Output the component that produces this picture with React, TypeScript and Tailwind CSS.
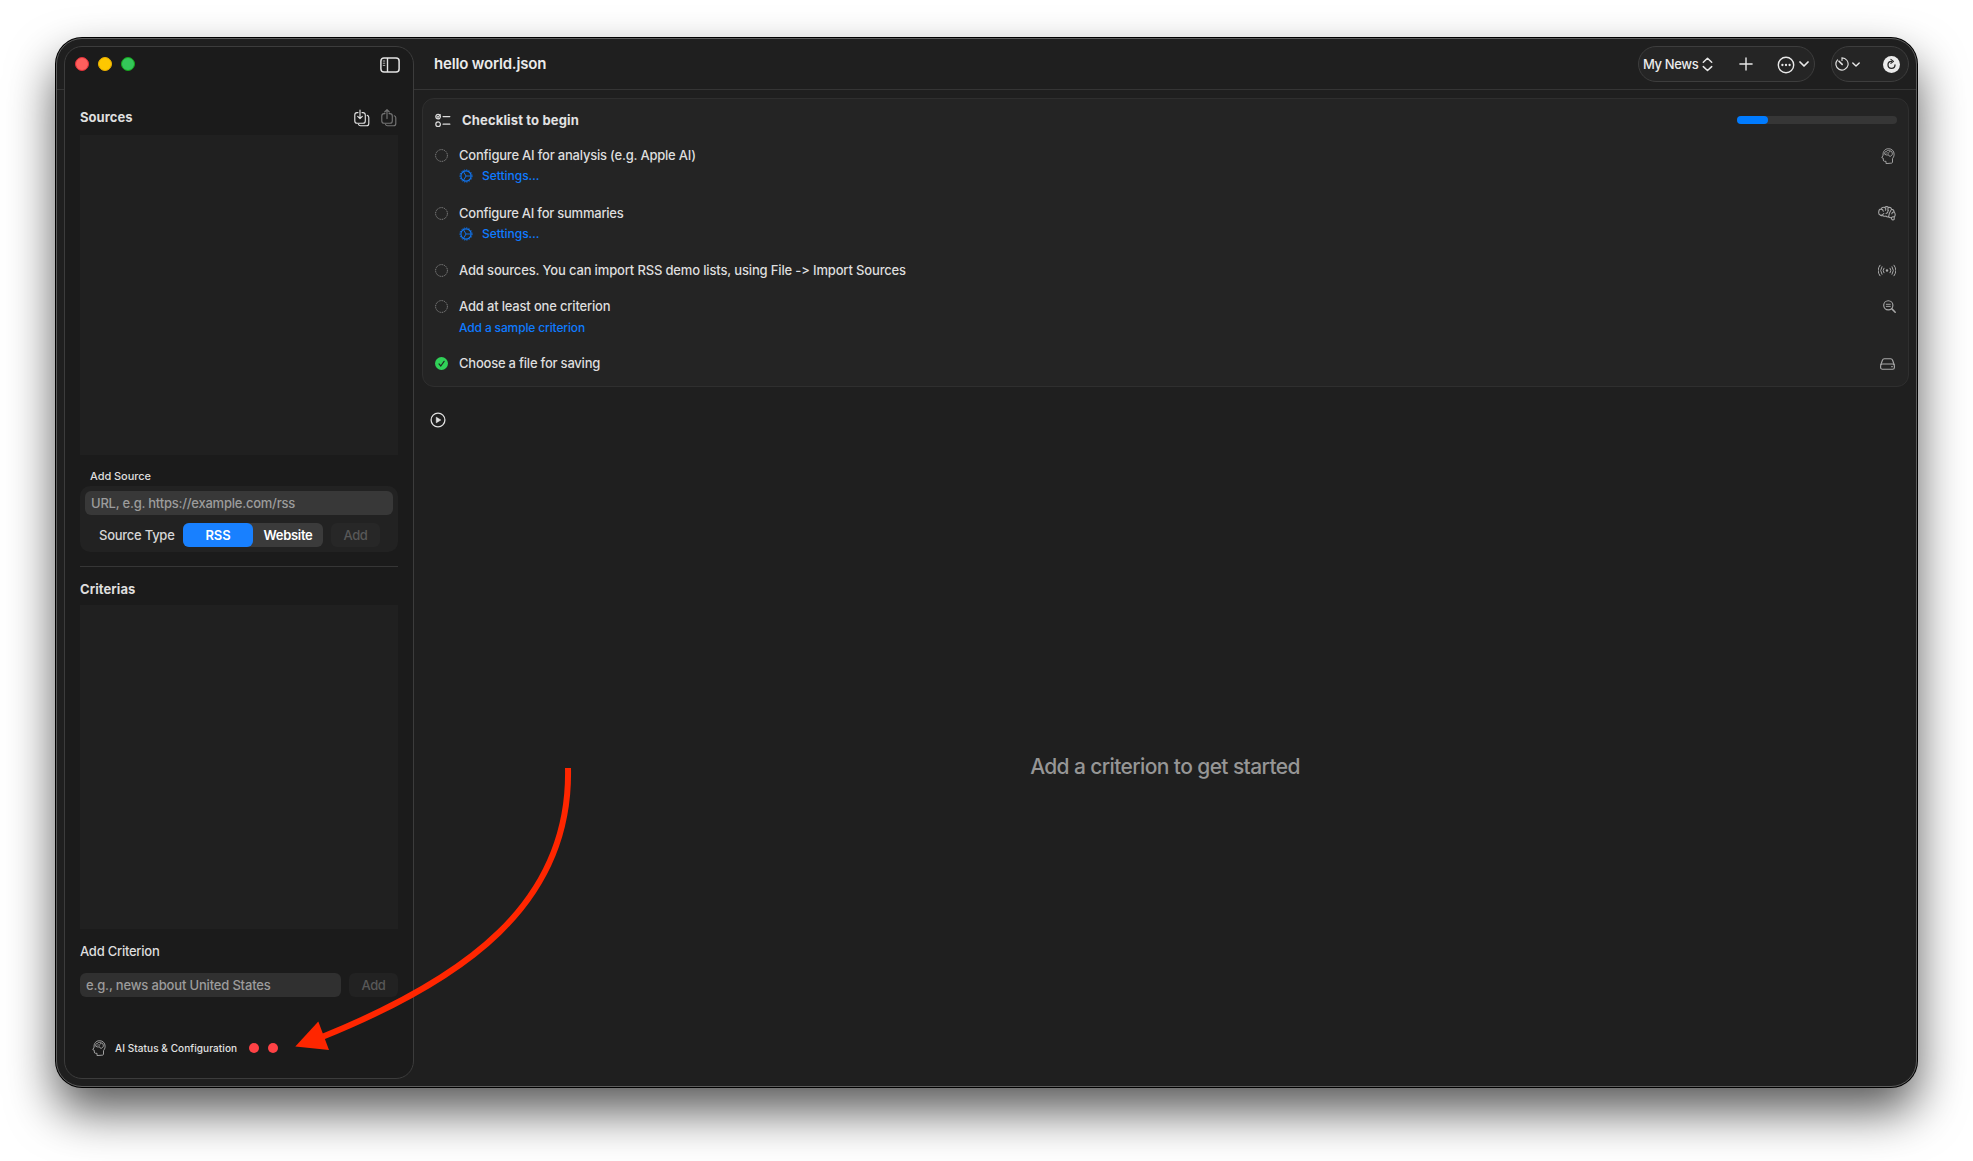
import React from "react";

type IconProps = { className?: string };

const SidebarIcon = () => (
  <svg width="20" height="16" viewBox="0 0 20 16" fill="none" stroke="#e4e4e4">
    <rect x="0.9" y="0.9" width="18.2" height="14.2" rx="3" strokeWidth="1.5" />
    <path d="M7.5 1v14" strokeWidth="1.4" />
    <path d="M2.8 4h2.4M2.8 6.2h2.4M2.8 8.4h2.4" strokeWidth="1" opacity="0.75" />
  </svg>
);

const ImportIcon = () => (
  <svg width="16" height="18" viewBox="0 0 16 18" fill="none" stroke="#e2e2e2" strokeWidth="1.15" strokeLinecap="round" strokeLinejoin="round">
    <path d="M4 3.6H3A2.3 2.3 0 0 0 .8 5.9v6A2.3 2.3 0 0 0 3 14.2h6a2.3 2.3 0 0 0 2.3-2.3v-6A2.3 2.3 0 0 0 9 3.6H8" />
    <path d="M6 1v8.6M3.7 7.4 6 9.7l2.3-2.3" />
    <path d="M13.2 6.4c1 .3 1.6 1 1.6 2v6a2.3 2.3 0 0 1-2.3 2.3h-6c-1 0-1.7-.5-2-1.3" />
  </svg>
);

const ExportIcon = () => (
  <svg width="16" height="18" viewBox="0 0 16 18" fill="none" stroke="#747474" strokeWidth="1.15" strokeLinecap="round" strokeLinejoin="round">
    <path d="M4 4.6H3A2.3 2.3 0 0 0 .8 6.9v5A2.3 2.3 0 0 0 3 14.2h6a2.3 2.3 0 0 0 2.3-2.3v-5A2.3 2.3 0 0 0 9 4.6H8" />
    <path d="M6 9.6V.9M3.7 3 6 .7 8.3 3" />
    <path d="M13.2 6.8c1 .3 1.6 1 1.6 2v5.6a2.3 2.3 0 0 1-2.3 2.3h-6c-1 0-1.700-.5-2-1.3" />
  </svg>
);

const HeadIcon = ({ className = "" }: IconProps) => (
  <svg className={className} width="14" height="16" viewBox="0 0 14 16" fill="none" stroke="#a8a8a8" strokeWidth="0.95" strokeLinecap="round" strokeLinejoin="round">
    <path d="M5 15.200v-1.900H3.600c-.9 0-1.300-.5-1.300-1.300v-1.600L.8 9.700l1.300-2.500C1.700 3.400 4.100.7 7.500.7c3.300 0 5.600 2.400 5.600 5.500 0 2.300-.9 3.300-1.600 4.500v3.300c0 .8-.4 1.200-1.200 1.200z" />
    <path d="M4 6.200c-.9-1.500.2-3 1.600-2.900.8-1.300 2.700-1.200 3.200-.3 1.500-.2 2.500.9 2.300 2 .6.9.2 2.300-.9 2.600-.4.900-1.500 1-2 .4L7.400 6.700c-1 .5-2.700.5-3.400-.5z" />
    <path d="M5.700 5c.7-.4 1.400-.2 1.800.3M8.700 3.200c.1.700-.2 1.100-.8 1.400" strokeWidth="0.8" />
  </svg>
);

const BrainIcon = () => (
  <svg width="18" height="15" viewBox="0 0 18 15" fill="none" stroke="#a8a8a8" strokeWidth="1.050" strokeLinecap="round" strokeLinejoin="round">
    <path d="M2.600 9.300C1.200 8.900.5 7.700.7 6.200.7 4.600 1.600 3.300 3 3.100 3.600 1.600 5.200.9 6.700 1.400 7.900.3 9.700.4 10.500 1.500c1.400-.3 2.700.4 3.100 1.700 1.500.2 2.500 1.400 2.500 2.800.9.9 1.300 2.300.9 3.600-.2.700-.5 1.100-.8 1.400v2.300c-.6.9-1.900.9-2.400 0l-.6-1.700c-.9.200-1.800-.1-2.300-.7-1.200.3-2.300 0-2.900-.8-1.100.4-2.300.2-3-.5-.9.300-1.700.1-2.400-.3z" />
    <path d="M2.600 9.300c1.600-.1 2.500-.8 3.200-1.800M3 3.200c1.400 0 2.200.8 2.300 2M6.700 1.500c1.200.6 1.400 1.700.8 2.800M10.500 1.600c-.9 1-.9 2 0 2.700M9.900 4.200c.3 1.600-.2 2.900-1.900 3.200M13.500 3.300c-1.400 2-2.500 4.300-2.900 7.400M16 6.100c-1.200-.1-2 .5-2.200 1.700M13.400 11.600c.8-.8 1.700-1.100 2.800-.7" />
  </svg>
);

const RadioIcon = () => (
  <svg width="18" height="13" viewBox="0 0 18 13" fill="none" stroke="#a8a8a8" strokeWidth="1" strokeLinecap="round">
    <circle cx="9" cy="6.5" r="1.2" fill="#a8a8a8" stroke="none" />
    <path d="M5.900 4.200a4 4 0 0 0 0 4.600M3.900 2.700a6.600 6.600 0 0 0 0 7.600M2 1.200a9 9 0 0 0 0 10.600M12.100 4.200a4 4 0 0 1 0 4.600M14.100 2.700a6.600 6.600 0 0 1 0 7.600M16 1.200a9 9 0 0 1 0 10.600" />
  </svg>
);

const SearchTextIcon = () => (
  <svg width="13" height="13" viewBox="0 0 13 13" fill="none" stroke="#a8a8a8" strokeLinecap="round">
    <circle cx="5.3" cy="5.3" r="4.6" strokeWidth="1.15" />
    <path d="M8.900 8.900l3.300 3.300" strokeWidth="1.5" />
    <path d="M3.300 4.300h4M3.300 6.400h4" strokeWidth="0.95" />
  </svg>
);

const DriveIcon = () => (
  <svg className="mr-px" width="15" height="12" viewBox="0 0 15 12" fill="none" stroke="#a8a8a8" strokeWidth="1.15" strokeLinejoin="round">
    <path d="M.7 7 2.500 2C2.800 1.100 3.400.7 4.300.7h6.400c.9 0 1.500.4 1.800 1.300l1.800 5" />
    <rect x="0.6" y="6" width="13.8" height="5.2" rx="1.8" />
    <path d="M11.300 8.600h1.400" />
  </svg>
);

const ChecklistIcon = () => (
  <svg className="mt-px" width="16" height="15" viewBox="0 0 16 15" fill="none" stroke="#dcdcdc" strokeLinecap="round">
    <circle cx="3.1" cy="3.6" r="2.3" strokeWidth="1.2" />
    <path d="M2.200 3.500l.8.900L5.200 1.600" strokeWidth="1.1" />
    <circle cx="3.1" cy="11.2" r="2.3" strokeWidth="1.2" />
    <path d="M8.100 3.600h6.700M8.100 11.200h6.700" strokeWidth="1.3" />
  </svg>
);

const GearIcon = () => (
  <svg width="14" height="14" viewBox="0 0 14 14" fill="none" stroke="#0f7bff">
    <circle cx="7" cy="7" r="5.1" strokeWidth="1.1" />
    <circle cx="7" cy="7" r="6.1" strokeWidth="0.9" strokeDasharray="1.3 1.255" />
    <path d="M4.700 3 7 7l-2.300 4M7 7h4.800" strokeWidth="0.9" />
  </svg>
);

const DottedCircle = () => (
  <svg width="13" height="13" viewBox="0 0 13 13" fill="none" stroke="#8a8a8a">
    <circle cx="6.5" cy="6.5" r="5.9" strokeWidth="1" strokeDasharray="1.1 0.754" />
  </svg>
);

const DoneCircle = () => (
  <svg width="13" height="13" viewBox="0 0 13 13" fill="none">
    <circle cx="6.5" cy="6.5" r="6.5" fill="#30d158" />
    <path d="M4 6.900l1.800 2.100 3.300-4.700" stroke="#1f2b22" strokeWidth="1.2" strokeLinecap="round" strokeLinejoin="round" />
  </svg>
);

const PlayIcon = () => (
  <svg width="16" height="16" viewBox="0 0 16 16">
    <circle cx="8" cy="8" r="6.9" fill="none" stroke="#e0e0e0" strokeWidth="1.3" />
    <path d="M6.200 5.100v5.800L11 8z" fill="#e0e0e0" stroke="#e0e0e0" strokeWidth="0.4" strokeLinejoin="round" />
  </svg>
);

const UpDownIcon = () => (
  <svg width="11" height="15" viewBox="0 0 11 15" fill="none" stroke="#e8e8e8" strokeWidth="1.5" strokeLinecap="round" strokeLinejoin="round">
    <path d="M1.300 5.200 5.500 1.300l4.200 3.900M1.300 9.600l4.200 3.900 4.200-3.900" />
  </svg>
);

const PlusIcon = () => (
  <svg width="14" height="14" viewBox="0 0 14 14" stroke="#e8e8e8" strokeWidth="1.4" strokeLinecap="round">
    <path d="M7 .9v12.200M.9 7h12.200" />
  </svg>
);

const MoreIcon = () => (
  <svg width="18" height="18" viewBox="0 0 18 18">
    <circle cx="9" cy="9" r="7.7" fill="none" stroke="#e8e8e8" strokeWidth="1.4" />
    <circle cx="5.4" cy="9" r="1.15" fill="#e8e8e8" />
    <circle cx="9" cy="9" r="1.15" fill="#e8e8e8" />
    <circle cx="12.6" cy="9" r="1.15" fill="#e8e8e8" />
  </svg>
);

const ChevronIcon = ({ className = "" }: IconProps) => (
  <svg className={className} viewBox="0 0 10 6" fill="none" stroke="#e8e8e8" strokeWidth="1.7" strokeLinecap="round" strokeLinejoin="round">
    <path d="M1 1l4 4 4-4" />
  </svg>
);

const TimerIcon = () => (
  <svg width="14" height="14" viewBox="0 0 14 14" fill="none" stroke="#e0e0e0" strokeLinecap="round">
    <path d="M7 3.400V.9a6.100 6.100 0 1 1-4.500 2" strokeWidth="1.15" />
    <path d="M4 4.200 7.200 7.400" strokeWidth="1.6" />
  </svg>
);

const RefreshIcon = () => (
  <svg width="17" height="17" viewBox="0 0 17 17" fill="none">
    <circle cx="8.5" cy="8.5" r="8.5" fill="#ebebeb" />
    <path d="M8.500 5.400a3.500 3.500 0 1 0 3.500 3.600" stroke="#262626" strokeWidth="1.3" strokeLinecap="round" />
    <path d="M7.900 3.400 10.500 5.400 7.900 7.400" stroke="#262626" strokeWidth="1.1" strokeLinecap="round" strokeLinejoin="round" />
  </svg>
);

const Item = ({
  label,
  done = false,
  icon,
  children,
}: {
  label: React.ReactNode;
  done?: boolean;
  icon: React.ReactNode;
  children?: React.ReactNode;
}) => (
  <div>
    <div className="flex h-[29px] items-center pr-[12px] pl-[12px]">
      {done ? <DoneCircle /> : <DottedCircle />}
      <div className="ml-[11px] grow text-[13px] font-medium text-[#dedede]">{label}</div>
      {icon}
    </div>
    {children}
  </div>
);

const SettingsLink = () => (
  <div className="flex h-[12px] items-center pl-[36px]">
    <GearIcon />
    <span className="ml-[9px] text-[12px] leading-none font-medium tracking-[-0.02px] text-[#0f7bff]">Settings…</span>
  </div>
);

const Sidebar = () => (
  <aside className="mt-[7px] flex h-[1033px] w-[350px] shrink-0 flex-col rounded-[18px] border border-[#3c3c3c] bg-[#1b1b1b] px-[15px]">
    <div className="flex h-[34px] items-center">
      <div className="ml-[-5px] flex gap-[9px]">
        <div className="size-[14px] rounded-full border border-[#e2303a] bg-[#ff5f5d]" />
        <div className="size-[14px] rounded-full border border-[#eab000] bg-[#fec700]" />
        <div className="size-[14px] rounded-full border border-[#15a51b] bg-[#34c759]" />
      </div>
      <div className="mt-px mr-[-2px] ml-auto">
        <SidebarIcon />
      </div>
    </div>

    <div className="mt-[20px] flex h-[34px] items-center pr-px">
      <h2 className="grow text-[13px] font-bold tracking-[0.05px] text-[#dedede]">Sources</h2>
      <div className="flex gap-[11px]">
        <ImportIcon />
        <ExportIcon />
      </div>
    </div>
    <div className="h-[320px] bg-[#202020]" />

    <div className="mt-[11px] flex h-[20px] items-center pl-[10px] text-[11px] font-medium tracking-[-0.05px] text-[#dedede]">
      Add Source
    </div>
    <div className="h-[66px] rounded-[10px] bg-[#222222] px-[5px] pt-[5px]">
      <div className="flex h-[24px] items-center rounded-[6px] bg-[#383838] pt-[2px] pl-[6px] text-[13px] font-medium tracking-[-0.23px] text-[#9c9c9c]">
        URL, e.g. https://example.com/rss
      </div>
      <div className="mt-[8px] flex h-[24px] items-center pl-[14px]">
        <span className="w-[84px] pt-[2px] text-[13px] font-medium tracking-[-0.25px] text-[#d6d6d6]">Source Type</span>
        <div className="flex h-full rounded-[6px] bg-[#3b3b3b] text-[13px] font-semibold text-white">
          <div className="flex w-[70px] items-center justify-center rounded-[6px] bg-[#1880ff] pt-[2px] tracking-[-0.2px]">RSS</div>
          <div className="flex w-[70px] items-center justify-center pt-[2px] tracking-[-0.3px]">Website</div>
        </div>
        <div className="ml-[8px] flex h-full w-[49px] items-center justify-center rounded-[6px] bg-[#272727] pt-[2px] text-[13px] font-medium tracking-[-0.4px] text-[#585858]">
          Add
        </div>
      </div>
    </div>

    <div className="mt-[14px] h-px bg-[#363636]" />
    <div className="flex h-[38px] items-center pt-[7px]">
      <h2 className="text-[13px] font-bold tracking-[0.08px] text-[#dedede]">Criterias</h2>
    </div>
    <div className="h-[324px] bg-[#202020]" />

    <div className="flex h-[44px] items-center pt-[2px] text-[13px] font-medium tracking-[-0.25px] text-[#dedede]">
      Add Criterion
    </div>
    <div className="flex h-[24px] gap-[8px]">
      <div className="flex grow items-center rounded-[6px] bg-[#303030] pt-[2px] pl-[6px] text-[13px] font-medium tracking-[-0.17px] text-[#9c9c9c]">
        e.g., news about United States
      </div>
      <div className="flex w-[49px] items-center justify-center rounded-[6px] bg-[#222222] pt-[2px] text-[13px] font-medium tracking-[-0.4px] text-[#585858]">
        Add
      </div>
    </div>

    <div className="mt-[39px] flex h-[24px] items-center pl-[12px]">
      <HeadIcon />
      <span className="ml-[9px] w-[134px] text-[10px] font-medium tracking-[0.08px] text-[#e2e2e2]">
        AI Status &amp; Configuration
      </span>
      <div className="flex gap-[9px]">
        <div className="size-[10px] rounded-full bg-[#ff4245]" />
        <div className="size-[10px] rounded-full bg-[#ff4245]" />
      </div>
    </div>
  </aside>
);

const Toolbar = () => (
  <header className="flex h-[51px] shrink-0 items-center border-b border-[#353535] pr-[7px] pl-[20px]">
    <h1 className="grow text-[15px] font-semibold tracking-[-0.18px] text-[#ebebeb]">hello world.json</h1>
    <div className="flex h-[36px] w-[177px] items-center rounded-full border border-[#3d3d3d] bg-[#252525] pl-[4px]">
      <span className="w-[59px] pt-[2px] text-[13px] font-medium tracking-[-0.38px] text-[#ebebeb]">My News</span>
      <UpDownIcon />
      <div className="ml-[26px]">
        <PlusIcon />
      </div>
      <div className="mt-px ml-[24px]">
        <MoreIcon />
      </div>
      <ChevronIcon className="ml-[4px] h-[6px] w-[10px]" />
    </div>
    <div className="ml-[16px] flex h-[36px] w-[78px] items-center rounded-full border border-[#3d3d3d] bg-[#252525] pl-[3px]">
      <TimerIcon />
      <ChevronIcon className="ml-[3px] h-[5px] w-[8px]" />
      <div className="mt-px ml-[23px]">
        <RefreshIcon />
      </div>
    </div>
  </header>
);

const Checklist = () => (
  <section className="mt-[8px] mr-[7px] ml-[8px] h-[289px] shrink-0 rounded-[12px] border border-[#2f2f2f] bg-[#242424]">
    <div className="flex h-[42px] items-center pr-[11px] pl-[12px]">
      <ChecklistIcon />
      <h2 className="ml-[11px] grow pt-[2px] text-[13px] font-bold tracking-[0.15px] text-[#e2e2e2]">Checklist to begin</h2>
      <div className="h-[8px] w-[160px] rounded-full bg-[#363636]">
        <div className="h-full w-[31px] rounded-full bg-[#007bff]" />
      </div>
    </div>
    <div className="flex flex-col">
      <Item label={<span className="tracking-[-0.21px]">Configure AI for analysis (e.g. Apple AI)</span>} icon={<HeadIcon className="mr-px" />}>
        <SettingsLink />
      </Item>
      <div className="mt-[17px]">
        <Item label={<span className="tracking-[-0.24px]">Configure AI for summaries</span>} icon={<BrainIcon />}>
          <SettingsLink />
        </Item>
      </div>
      <div className="mt-[16px]">
        <Item
          label={<span className="tracking-[-0.155px]">Add sources. You can import RSS demo lists, using File -&gt; Import Sources</span>}
          icon={<RadioIcon />}
        />
      </div>
      <div className="mt-[7px]">
        <Item label={<span className="tracking-[-0.18px]">Add at least one criterion</span>} icon={<SearchTextIcon />}>
          <div className="flex h-[13px] items-center pl-[36px] text-[12px] leading-none font-medium tracking-[-0.14px] text-[#0f7bff]">
            Add a sample criterion
          </div>
        </Item>
      </div>
      <div className="mt-[15px]">
        <Item done label={<span className="tracking-[-0.22px]">Choose a file for saving</span>} icon={<DriveIcon />} />
      </div>
    </div>
  </section>
);

export default function App() {
  return (
    <div className="h-[1161px] w-[1973px] overflow-hidden bg-white pt-[38px] pl-[56px] font-['Inter',sans-serif] whitespace-nowrap">
      <div className="relative flex h-[1049px] w-[1861px] rounded-[26px] border border-[#5c5c5c] bg-[#1f1f1f] shadow-[0_0_0_1px_#000,0_24px_48px_rgba(0,0,0,0.66)]">
        <div className="w-[7px] shrink-0">
          <div className="h-[51px] border-b border-[#353535]" />
        </div>
        <Sidebar />
        <main className="flex min-w-0 grow flex-col">
          <Toolbar />
          <Checklist />
          <div className="flex h-[65px] shrink-0 items-center pl-[16px]">
            <PlayIcon />
          </div>
          <div className="flex grow items-center justify-center pb-[5px] text-[21px] font-medium tracking-[-0.61px] text-[#969696]">
            Add a criterion to get started
          </div>
        </main>
        <svg className="pointer-events-none absolute top-[721px] left-[233px]" width="290" height="300" viewBox="290 760 290 300">
          <path d="M568 768C571 905 463 980 322 1037" fill="none" stroke="#ff2600" strokeWidth="6" />
          <path d="M295.300 1046.600 318.300 1021.500 329 1050z" fill="#ff2600" />
        </svg>
      </div>
    </div>
  );
}
